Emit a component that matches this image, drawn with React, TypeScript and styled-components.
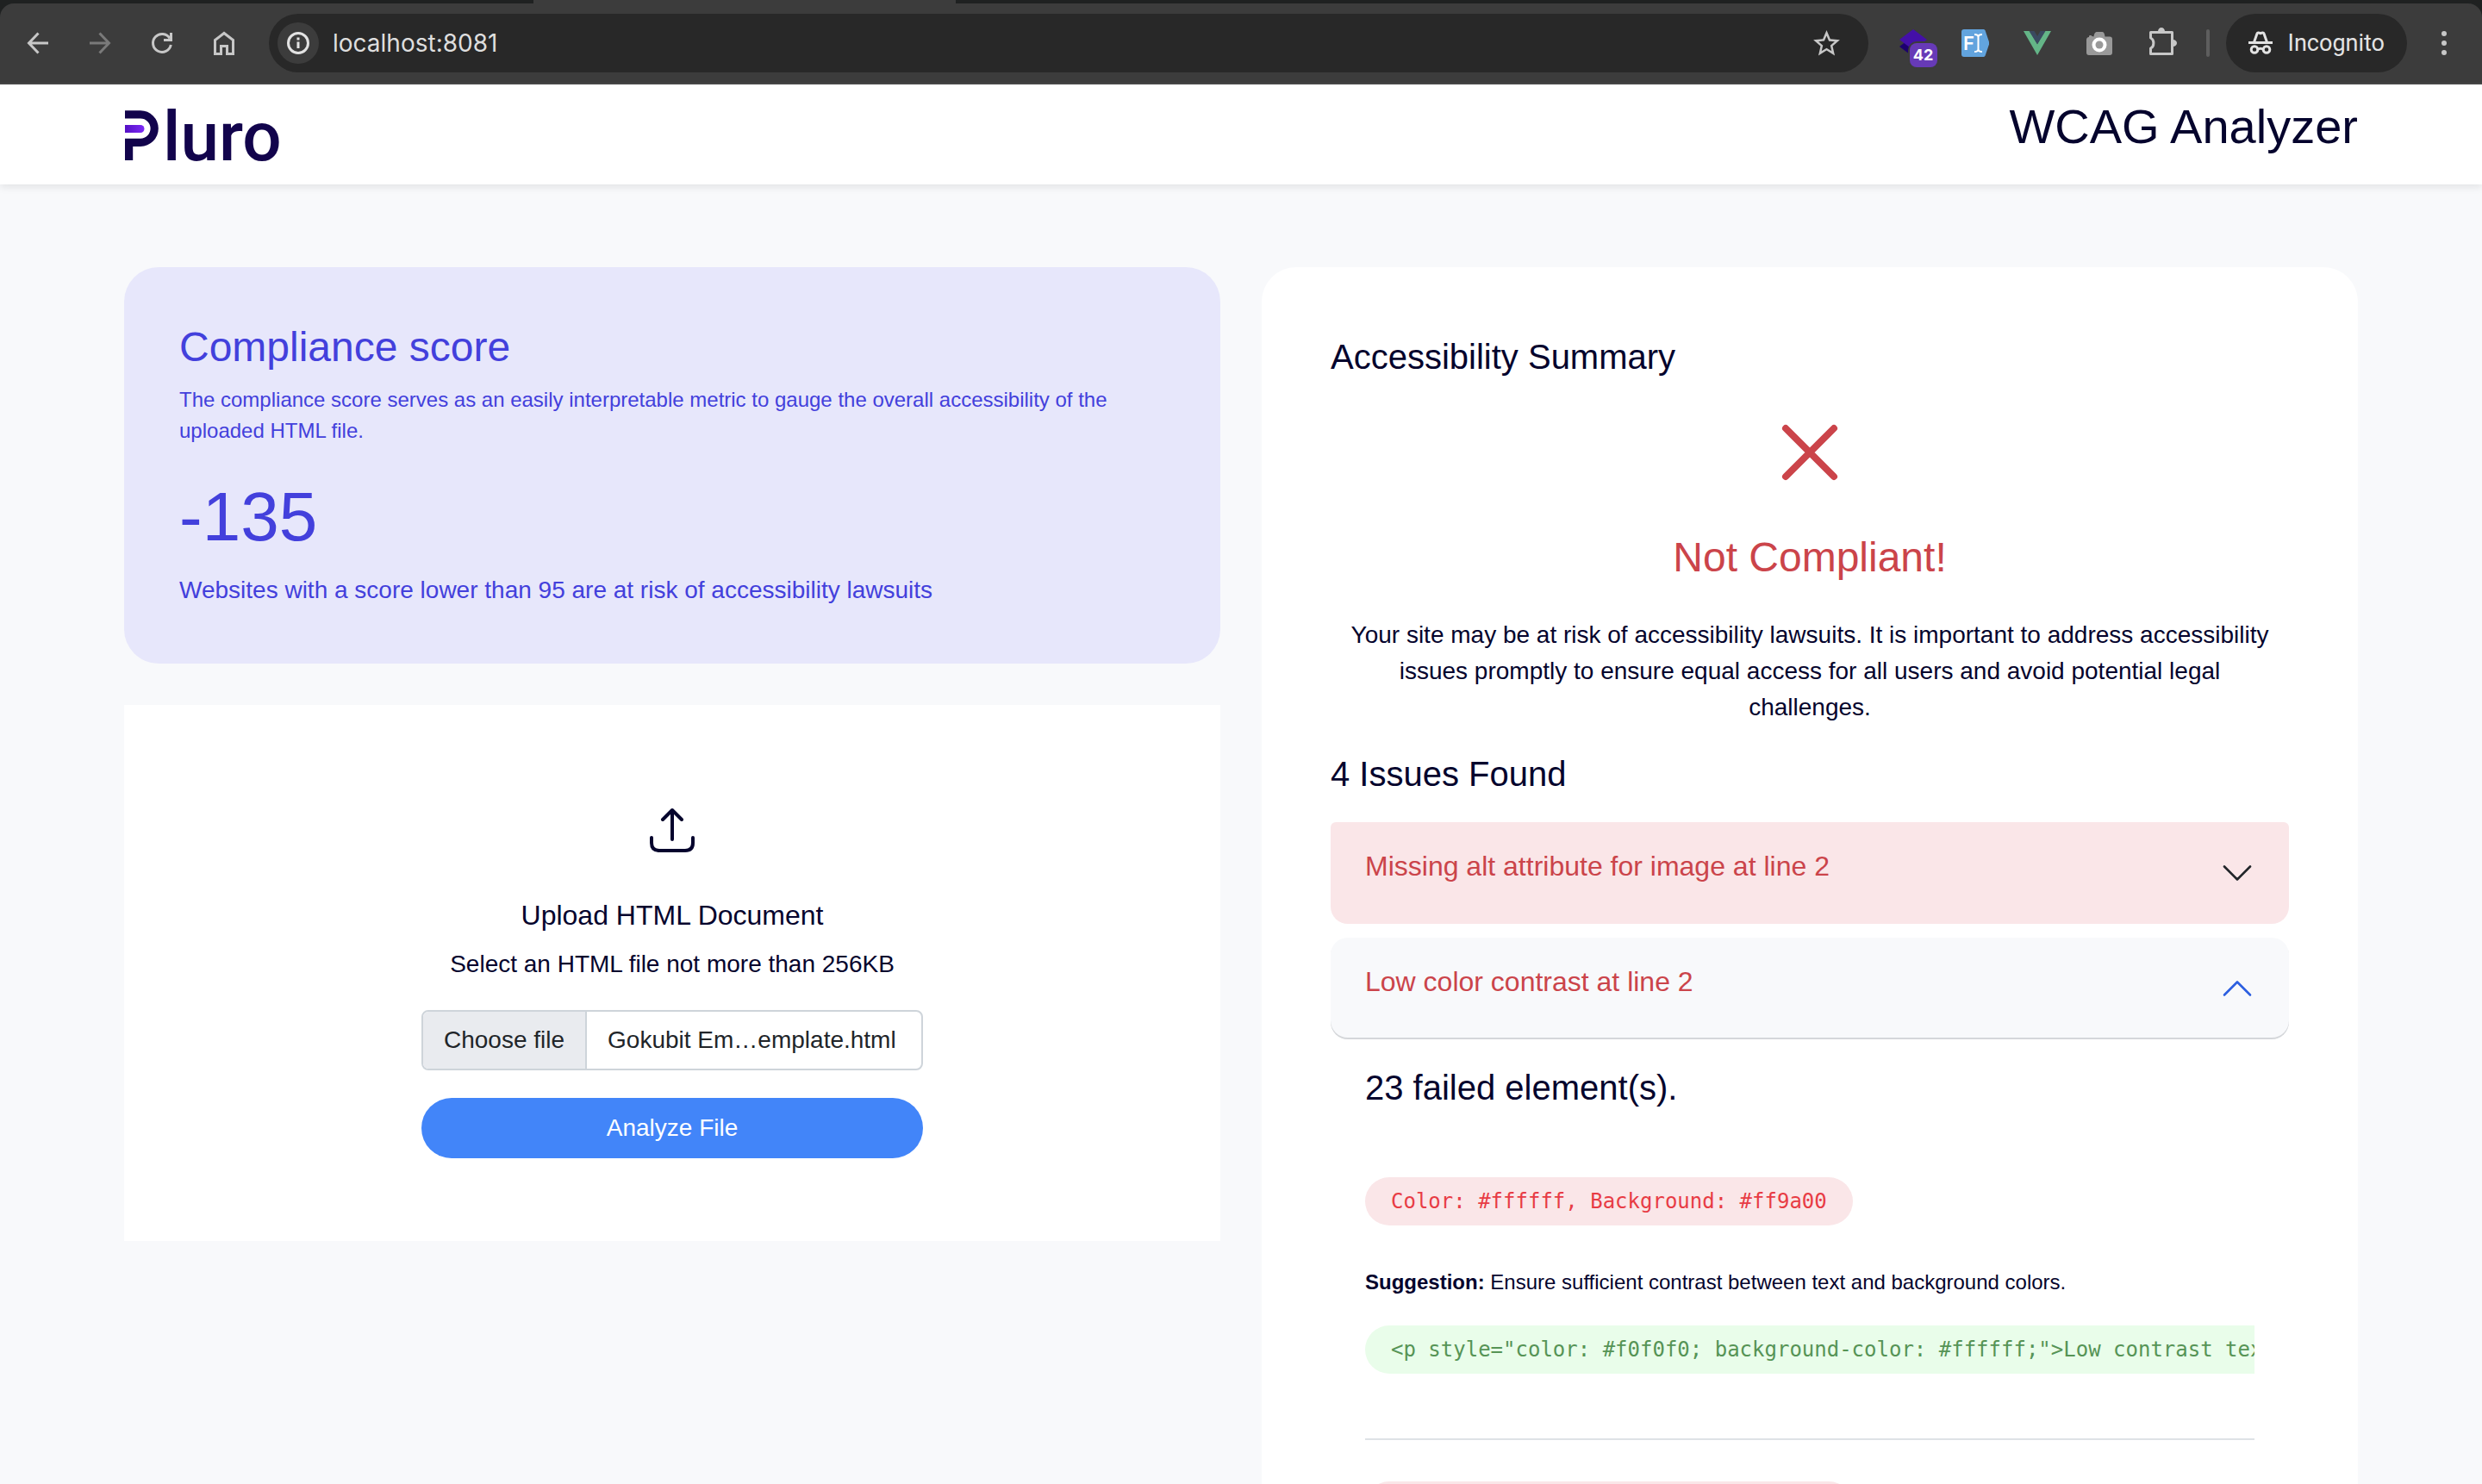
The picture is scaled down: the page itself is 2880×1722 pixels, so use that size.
import React, { useState } from "react";
import styled, { createGlobalStyle, css } from "styled-components";
import { MdStarBorder } from "react-icons/md";

const color = {
  ink: "#05042d",
  danger: "#cb444a",
  dangerSoft: "#fae6e8",
  indigo: "#4340dc",
  indigoSoft: "#e7e7fb",
  page: "#f8f9fb",
  chrome: "#3c3c3c",
  chromeDark: "#282828",
  chromeIcon: "#c7c7c7",
};

const GlobalStyle = createGlobalStyle`
  *, *::before, *::after { box-sizing: border-box; }
  body {
    margin: 0;
    background: ${color.page};
    color: ${color.ink};
    font: 400 28px/42px "Liberation Sans", Arial, sans-serif;
  }
  h1, h2, h3, p { margin: 0; font-weight: 400; }
  button, input { font: inherit; color: inherit; }
`;

/* ---------- Browser chrome ---------- */

const Window = styled.div`
  display: flex;
  flex-direction: column;
  height: 100vh;
`;

const TabStrip = styled.div`
  display: flex;
  height: 4px;
  background: #1f2121;
`;

const ActiveTab = styled.div`
  width: 17%;
  margin-left: 21.5%;
  background: ${color.chrome};
`;

const ToolbarBack = styled.div`
  background: #1f2121;
`;

const Toolbar = styled.nav`
  display: flex;
  align-items: center;
  gap: 28px;
  padding: 12px 20px;
  background: ${color.chrome};
  border-bottom: 2px solid #464646;
  border-radius: 16px 16px 0 0;
`;

const IconGroup = styled.div`
  display: flex;
  gap: 24px;
`;

const IconButton = styled.button<{ $dim?: boolean }>`
  position: relative;
  display: grid;
  place-items: center;
  width: 48px;
  height: 48px;
  padding: 0;
  border: 0;
  border-radius: 50%;
  background: none;
  color: ${(p) => (p.$dim ? "#7a7a7a" : color.chromeIcon)};
`;

const InfoButton = styled(IconButton)`
  background: ${color.chrome};
  color: #e3e3e3;
`;

const Omnibox = styled.div`
  display: flex;
  flex: 1;
  align-items: center;
  gap: 16px;
  height: 68px;
  padding: 0 24px 0 10px;
  border-radius: 34px;
  background: ${color.chromeDark};
`;

const Address = styled.input`
  flex: 1;
  min-width: 0;
  padding: 0;
  border: 0;
  outline: 0;
  background: none;
  color: #dedede;
  font: 400 28px/36px Inter, Roboto, sans-serif;
`;

const Badge = styled.span`
  position: absolute;
  right: -4px;
  bottom: -4px;
  width: 32px;
  height: 28px;
  border-radius: 8px;
  background: #673ab7;
  box-shadow: 0 0 0 2px ${color.chrome};
  color: #fff;
  font: 700 18px/28px Inter, sans-serif;
  text-align: center;
`;

const ProfileGroup = styled.div`
  display: flex;
  align-items: center;
  gap: 19px;
`;

const Divider = styled.span`
  width: 4px;
  height: 32px;
  border-radius: 2px;
  background: #5e5e5e;
`;

const IncognitoChip = styled.button`
  display: flex;
  align-items: center;
  gap: 18px;
  height: 68px;
  padding: 0 26px;
  border: 0;
  border-radius: 34px;
  background: ${color.chromeDark};
  color: #e3e3e3;
  font: 400 27px/36px Roboto, sans-serif;
`;

const Line = ({ size = 48, width = 3, children }: { size?: number; width?: number; children: React.ReactNode }) => (
  <svg width={size} height={size} viewBox={`0 0 ${size} ${size}`} fill="none" stroke="currentColor" strokeWidth={width} aria-hidden="true">
    {children}
  </svg>
);

const BrowserToolbar = () => (
  <header>
    <TabStrip>
      <ActiveTab />
    </TabStrip>
    <ToolbarBack>
      <Toolbar aria-label="Browser">
        <IconGroup>
          <IconButton aria-label="Back">
            <Line><path d="M36 24H14M24.5 12.5 13.5 24l11 11.5" /></Line>
          </IconButton>
          <IconButton aria-label="Forward" $dim>
            <Line><path d="M12 24h22M23.5 12.5 34.5 24l-11 11.5" /></Line>
          </IconButton>
          <IconButton aria-label="Reload">
            <Line><path d="M34.3 26A10.5 10.5 0 1 1 33 18.5M34.5 12v8.5H26" /></Line>
          </IconButton>
          <IconButton aria-label="Home">
            <Line><path d="M13.5 36.5v-16L24 12.5l10.5 8v16h-7v-9h-7v9z" /></Line>
          </IconButton>
        </IconGroup>
        <Omnibox>
          <InfoButton aria-label="Site information">
            <Line>
              <circle cx="24" cy="24" r="11.5" />
              <path d="M24 22.5V30M24 17.5v3" />
            </Line>
          </InfoButton>
          <Address aria-label="Address" defaultValue="localhost:8081" />
          <IconButton aria-label="Bookmark this page"><MdStarBorder size={37} /></IconButton>
        </Omnibox>
        <IconGroup>
          <IconButton aria-label="Layers extension">
            <Line width={0}>
              <path fill="#1c006e" d="m24 16 16 12-16 12L8 28z" />
              <path fill="#4410a8" d="m24 8 16 12-16 12L8 20z" />
            </Line>
            <Badge>42</Badge>
          </IconButton>
          <IconButton aria-label="Font finder extension">
            <Line width={2}>
              <path stroke="none" fill="#62a4de" d="M11 8h22c1 0 2 .4 2.6 1.4L40 22.5v3l-4.400 13C35 39.600 34 40 33 40H11c-2 0-3-1-3-3V11c0-2 1-3 3-3z" />
              <text x="10" y="32" fill="#fff" stroke="none" fontFamily="Inter, sans-serif" fontSize="22" fontWeight="600">F</text>
              <path stroke="#fff" d="M23 14c3 0 4.500 1 4.500 3v14c0 2-1.500 3-4.500 3M32 14c-3 0-4.500 1-4.500 3v14c0 2 1.500 3 4.500 3" />
            </Line>
          </IconButton>
          <IconButton aria-label="Vue devtools">
            <Line width={0}>
              <path fill="#64b587" d="M8 10h7l9 15 9-15h7L24 38z" />
              <path fill="#3a4a60" d="M14.500 10h6l3.500 6 3.500-6h6L24 25.500z" />
            </Line>
          </IconButton>
          <IconButton aria-label="Screenshot extension">
            <Line width={0}>
              <path fill="#999" d="M12 17v-1c0-1.500 3-1.500 3.500 0l2 .5c.5-3 1-5.500 4-5.500h5c3 0 3.500 2 4 5.500h5.500c2 0 3 1.200 3 3V35c0 2-1 3-3 3H12c-2 0-3-1-3-3V20c0-1.500 1-3 3-3z" />
              <circle cx="24" cy="26" r="8.500" fill="#fff" />
              <circle cx="24" cy="26" r="4.500" fill="#999" />
            </Line>
          </IconButton>
          <IconButton aria-label="Extensions">
            <Line>
              <path strokeLinejoin="round" d="M11.500 11.500h25v25h-25v-6.500c4.500-2 4.500-10 0-12z" />
              <path stroke="none" fill="currentColor" d="M20 10.500a4 4.500 0 0 1 8 0zM37.500 20a4.500 4 0 0 1 0 8z" />
            </Line>
          </IconButton>
        </IconGroup>
        <ProfileGroup>
          <Divider />
          <IncognitoChip>
            <Line size={28}>
              <path d="M0 13.500h28M6.500 13 10 3c.5-1.300 2-1.300 4-.3 2-1 3.500-1 4 .3l3.500 10" />
              <circle cx="7" cy="21.500" r="3.800" />
              <circle cx="21" cy="21.500" r="3.800" />
              <path d="M10.500 21.500c2-1.500 5-1.500 7 0" />
            </Line>
            Incognito
          </IncognitoChip>
          <IconButton aria-label="Browser menu">
            <Line width={0}>
              <g fill="currentColor">
                <circle cx="24" cy="13" r="3" />
                <circle cx="24" cy="24" r="3" />
                <circle cx="24" cy="35" r="3" />
              </g>
            </Line>
          </IconButton>
        </ProfileGroup>
      </Toolbar>
    </ToolbarBack>
  </header>
);

/* ---------- Page ---------- */

const Page = styled.div`
  flex: 1;
  min-height: 0;
  overflow: auto;
  scrollbar-width: none;
`;

const SiteHeader = styled.header`
  display: flex;
  justify-content: space-between;
  align-items: flex-start;
  padding: 16px 5%;
  background: #fff;
  box-shadow: 0 4px 8px rgba(0, 0, 0, 0.08);
`;

const LogoLink = styled.a`
  display: flex;
  align-items: baseline;
  gap: 5px;
  padding: 12px 0;
  color: #12044c;
  text-decoration: none;
  font: 500 80px/52px Roboto, sans-serif;
`;

const AppTitle = styled.h1`
  font-size: 56px;
  line-height: 66px;
`;

const Columns = styled.main`
  display: grid;
  grid-template-columns: minmax(0, 1fr) minmax(0, 1fr);
  align-items: start;
  gap: 48px;
  padding: 96px 5%;
`;

const Stack = styled.div`
  display: flex;
  flex-direction: column;
  gap: 48px;
`;

const ScoreCard = styled.section`
  padding: 64px;
  border-radius: 40px;
  background: ${color.indigoSoft};
  color: ${color.indigo};
`;

const ScoreTitle = styled.h2`
  margin-bottom: 14px;
  font-size: 48px;
  line-height: 58px;
`;

const SmallText = styled.p`
  font-size: 24px;
  line-height: 36px;
`;

const ScoreValue = styled.p`
  margin: 34px 0 16px;
  font-size: 80px;
  line-height: 96px;
`;

const UploadCard = styled.section`
  display: flex;
  flex-direction: column;
  align-items: center;
  padding: 96px 64px;
  background: #fff;
  text-align: center;
`;

const UploadTitle = styled.h2`
  margin: 32px 0 16px;
  font-size: 32px;
  line-height: 40px;
`;

const UploadForm = styled.form`
  display: flex;
  flex-direction: column;
  gap: 32px;
  width: 100%;
  max-width: 582px;
  margin-top: 32px;
`;

const FilePicker = styled.label`
  position: relative;
  display: flex;
  overflow: hidden;
  border: 2px solid #ced4da;
  border-radius: 8px;
  color: #212529;
`;

const FileInput = styled.input`
  position: absolute;
  inset: 0;
  opacity: 0;
`;

const FileCell = styled.span<{ $button?: boolean }>`
  padding: 12px 24px;
  ${(p) =>
    p.$button &&
    css`
      border-right: 2px solid #ced4da;
      background: #e9ebef;
    `}
`;

const AnalyzeButton = styled.button`
  padding: 14px 24px;
  border: 0;
  border-radius: 35px;
  background: #4285f9;
  color: #fff;
`;

const SummaryCard = styled.section`
  padding: 80px;
  border-radius: 40px;
  background: #fff;
`;

const SectionTitle = styled.h2`
  font-size: 40px;
  line-height: 48px;
`;

const Verdict = styled.div`
  display: flex;
  flex-direction: column;
  align-items: center;
  padding: 40px 8px 32px;
  text-align: center;
`;

const VerdictTitle = styled.h3`
  margin: 44px 0 40px;
  color: ${color.danger};
  font-size: 48px;
  line-height: 58px;
`;

const Accordion = styled.div`
  display: flex;
  flex-direction: column;
  gap: 16px;
  margin-top: 32px;
`;

const AccordionButton = styled.button<{ $open: boolean; $first: boolean }>`
  display: flex;
  align-items: center;
  justify-content: space-between;
  width: 100%;
  padding: 32px 40px;
  border: 0;
  border-radius: ${(p) => (p.$first ? "6px 6px 20px 20px" : "20px")};
  background: ${(p) => (p.$open ? color.page : color.dangerSoft)};
  box-shadow: ${(p) => (p.$open ? "inset 0 -2px 0 #d5d7da" : "none")};
  color: ${color.danger};
  text-align: left;
`;

const IssueName = styled.span`
  padding-bottom: 16px;
  font-size: 32px;
  line-height: 38px;
`;

const Chevron = styled.svg<{ $open: boolean }>`
  color: ${(p) => (p.$open ? "#2c5fe0" : "#212529")};
  transform: ${(p) => (p.$open ? "rotate(180deg)" : "none")};
`;

const IssueBody = styled.div`
  padding: 32px 40px;
`;

const FailedElement = styled.article`
  margin-top: 80px;

  & + & {
    margin-top: 75px;
    padding-top: 48px;
    border-top: 2px solid #dee2e6;
  }
`;

const CodeScroller = styled.div`
  overflow: hidden;
`;

const Code = styled.code<{ $good?: boolean }>`
  display: block;
  width: max-content;
  padding: 10px 30px;
  border-radius: 28px;
  background: ${(p) => (p.$good ? "#e9fdea" : color.dangerSoft)};
  color: ${(p) => (p.$good ? "#569456" : "#e83c45")};
  font: 400 24px/36px "DejaVu Sans Mono", Menlo, monospace;
  white-space: pre;
`;

const Suggestion = styled(SmallText)`
  margin: 48px 0 32px;
`;

const PlainText = styled.p``;

const Logo = () => (
  <LogoLink href="#" aria-label="Pluro">
    <svg width="40" height="60" viewBox="0 0 40 60" fill="none" aria-hidden="true">
      <defs>
        <linearGradient id="stripe">
          <stop offset="0" stopColor="#5410c4" />
          <stop offset="1" stopColor="#7d2af7" />
        </linearGradient>
      </defs>
      <path stroke="#12044c" strokeWidth="9.2" d="M1 6.900H19a16.200 16.200 0 0 1 0 32.400H5.600V60" />
      <path fill="url(#stripe)" d="M1 19h18a4.500 4.500 0 0 1 0 9H1z" />
    </svg>
    <span>luro</span>
  </LogoLink>
);

const issues = [
  { name: "Missing alt attribute for image at line 2", failed: [] },
  {
    name: "Low color contrast at line 2",
    failed: [
      { found: "Color: #ffffff, Background: #ff9a00" },
      { found: "Color: #ffffff, Background: #ff9a00" },
    ],
  },
];

const fix = '<p style="color: #f0f0f0; background-color: #ffffff;">Low contrast text</p>';

export default function App() {
  const [open, setOpen] = useState(1);

  return (
    <Window>
      <GlobalStyle />
      <BrowserToolbar />
      <Page>
        <SiteHeader>
          <Logo />
          <AppTitle>WCAG Analyzer</AppTitle>
        </SiteHeader>
        <Columns>
          <Stack>
            <ScoreCard>
              <ScoreTitle>Compliance score</ScoreTitle>
              <SmallText>
                The compliance score serves as an easily interpretable metric to gauge the overall accessibility of the
                uploaded HTML file.
              </SmallText>
              <ScoreValue>-135</ScoreValue>
              <PlainText>Websites with a score lower than 95 are at risk of accessibility lawsuits</PlainText>
            </ScoreCard>
            <UploadCard>
              <Line size={96} width={4}>
                <path strokeLinecap="round" strokeLinejoin="round" d="M48 60V26M37 37l11-11 11 11M24 58v6c0 6 3 9 9 9h30c6 0 9-3 9-9v-6" />
              </Line>
              <UploadTitle>Upload HTML Document</UploadTitle>
              <PlainText>Select an HTML file not more than 256KB</PlainText>
              <UploadForm onSubmit={(e) => e.preventDefault()}>
                <FilePicker>
                  <FileInput type="file" accept=".html" />
                  <FileCell $button>Choose file</FileCell>
                  <FileCell>Gokubit Em…emplate.html</FileCell>
                </FilePicker>
                <AnalyzeButton type="submit">Analyze File</AnalyzeButton>
              </UploadForm>
            </UploadCard>
          </Stack>
          <SummaryCard>
            <SectionTitle>Accessibility Summary</SectionTitle>
            <Verdict>
              <svg width="96" height="96" viewBox="0 0 96 96" fill="none" stroke={color.danger} strokeWidth="8" strokeLinecap="round" aria-hidden="true">
                <path d="m20 19 56 56M76 19 20 75" />
              </svg>
              <VerdictTitle>Not Compliant!</VerdictTitle>
              <PlainText>
                Your site may be at risk of accessibility lawsuits. It is important to address accessibility issues
                promptly to ensure equal access for all users and avoid potential legal challenges.
              </PlainText>
            </Verdict>
            <SectionTitle>4 Issues Found</SectionTitle>
            <Accordion>
              {issues.map((issue, i) => (
                <div key={issue.name}>
                  <AccordionButton $open={open === i} $first={i === 0} aria-expanded={open === i} onClick={() => setOpen(open === i ? -1 : i)}>
                    <IssueName>{issue.name}</IssueName>
                    <Chevron $open={open === i} width="40" height="40" viewBox="0 0 40 40" fill="none" stroke="currentColor" strokeWidth="2.6" strokeLinecap="round" strokeLinejoin="round" aria-hidden="true">
                      <path d="m5 12.500 15 15 15-15" />
                    </Chevron>
                  </AccordionButton>
                  {open === i && issue.failed.length > 0 && (
                    <IssueBody>
                      <SectionTitle>23 failed element(s).</SectionTitle>
                      {issue.failed.map((element, n) => (
                        <FailedElement key={n}>
                          <CodeScroller>
                            <Code>{element.found}</Code>
                          </CodeScroller>
                          <Suggestion>
                            <strong>Suggestion:</strong> Ensure sufficient contrast between text and background colors.
                          </Suggestion>
                          <CodeScroller>
                            <Code $good>{fix}</Code>
                          </CodeScroller>
                        </FailedElement>
                      ))}
                    </IssueBody>
                  )}
                </div>
              ))}
            </Accordion>
          </SummaryCard>
        </Columns>
      </Page>
    </Window>
  );
}
